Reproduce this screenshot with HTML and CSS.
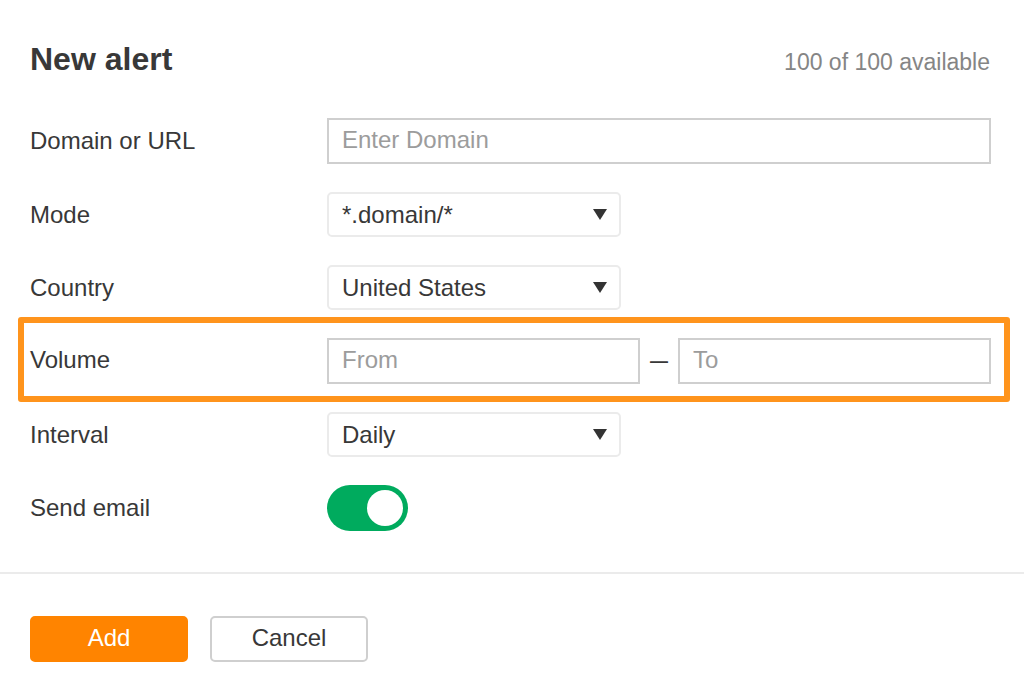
FILE: index.html
```html
<!DOCTYPE html>
<html lang="en">
<head>
<meta charset="utf-8">
<meta name="viewport" content="width=device-width, initial-scale=1">
<title>New alert</title>
<link rel="stylesheet" href="styles.css">
</head>
<body>
<form class="alert-form">
  <header class="header">
    <h1 class="title">New alert</h1>
    <span class="quota">100 of 100 available</span>
  </header>

  <div class="fields">
    <div class="row">
      <label class="label" for="domain">Domain or URL</label>
      <input class="input" id="domain" type="text" placeholder="Enter Domain">
    </div>
    <div class="row">
      <label class="label" for="mode">Mode</label>
      <div class="select-wrap">
        <select class="select" id="mode"><option>*.domain/*</option></select>
        <svg class="arrow" viewBox="0 0 14 11" aria-hidden="true"><path d="M0 0h14L7 11z"/></svg>
      </div>
    </div>
    <div class="row">
      <label class="label" for="country">Country</label>
      <div class="select-wrap">
        <select class="select" id="country"><option>United States</option></select>
        <svg class="arrow" viewBox="0 0 14 11" aria-hidden="true"><path d="M0 0h14L7 11z"/></svg>
      </div>
    </div>
    <div class="row row-highlight">
      <label class="label label-range" for="volume-from">Volume</label>
      <div class="range">
        <input class="input" id="volume-from" type="text" placeholder="From">
        <span class="dash">—</span>
        <input class="input" id="volume-to" type="text" placeholder="To" aria-label="Volume to">
      </div>
    </div>
    <div class="row">
      <label class="label" for="interval">Interval</label>
      <div class="select-wrap">
        <select class="select" id="interval"><option>Daily</option></select>
        <svg class="arrow" viewBox="0 0 14 11" aria-hidden="true"><path d="M0 0h14L7 11z"/></svg>
      </div>
    </div>
    <div class="row">
      <label class="label" for="send-email">Send email</label>
      <input class="toggle" id="send-email" type="checkbox" role="switch" checked>
    </div>
  </div>

  <footer class="footer">
    <button class="button button-primary" type="submit">Add</button>
    <button class="button" type="button">Cancel</button>
  </footer>
</form>
</body>
</html>
```
FILE: styles.css
```css
* {
  box-sizing: border-box;
}

body {
  margin: 0;
  background: #fff;
  color: #383838;
  font: 24px/28px "Liberation Sans", Arial, sans-serif;
}

.header {
  display: flex;
  justify-content: space-between;
  align-items: baseline;
  padding: 40px 34px 0 30px;
}

.title {
  margin: 0;
  font-size: 32px;
  line-height: 38px;
}

.quota {
  color: #858585;
  font-size: 23px;
}

.fields {
  display: flex;
  flex-direction: column;
  gap: 28px;
  padding: 40px 33px 41px 30px;
}

.row {
  display: grid;
  grid-template-columns: 297px 1fr;
  align-items: center;
}

.label-range {
  padding-bottom: 2px;
}

.input {
  width: 100%;
  min-width: 0;
  height: 46px;
  margin: 0;
  padding: 0 13px 2px;
  border: 2px solid #cfcfcf;
  border-radius: 0;
  background: #fff;
  color: #383838;
  font: inherit;
}

.input::placeholder {
  color: #9c9c9c;
  opacity: 1;
}

.select-wrap {
  display: grid;
  width: 294px;
  align-items: center;
}

.select,
.arrow {
  grid-area: 1 / 1;
}

.select {
  appearance: none;
  width: 100%;
  height: 45px;
  margin: 0;
  padding: 0 40px 0 13px;
  border: 2px solid #ebebeb;
  border-radius: 5px;
  background: #fff;
  color: #383838;
  font: inherit;
}

.arrow {
  justify-self: end;
  width: 14px;
  height: 11px;
  margin-right: 14px;
  fill: #333;
  pointer-events: none;
}

.row-highlight {
  position: relative;
}

/* Frame drawn around the volume row, over the gaps to its neighbours */
.row-highlight::after {
  content: "";
  position: absolute;
  inset: -21px -19px -18px -12px;
  border: 6px solid #ff941c;
  border-radius: 3px;
  pointer-events: none;
}

.range {
  display: grid;
  grid-template-columns: 1fr 38px 1fr;
  align-items: center;
}

.dash {
  font-size: 18px;
  font-weight: bold;
  text-align: center;
}

.toggle {
  appearance: none;
  display: flex;
  justify-content: flex-end;
  align-items: center;
  width: 81px;
  height: 46px;
  margin: 0;
  padding: 5px;
  border-radius: 23px;
  background: #00ab5e;
}

.toggle::before {
  content: "";
  width: 36px;
  height: 36px;
  border-radius: 50%;
  background: #fff;
}

.toggle:not(:checked) {
  justify-content: flex-start;
  background: #ccc;
}

.footer {
  display: flex;
  gap: 22px;
  padding: 42px 30px 32px;
  border-top: 2px solid #ebebeb;
}

.button {
  width: 158px;
  height: 46px;
  padding: 0 0 2px;
  border: 2px solid #cfcfcf;
  border-radius: 5px;
  background: #fff;
  color: #383838;
  font: inherit;
}

.button-primary {
  border-color: #ff8400;
  background: #ff8400;
  color: #fff;
}
```
